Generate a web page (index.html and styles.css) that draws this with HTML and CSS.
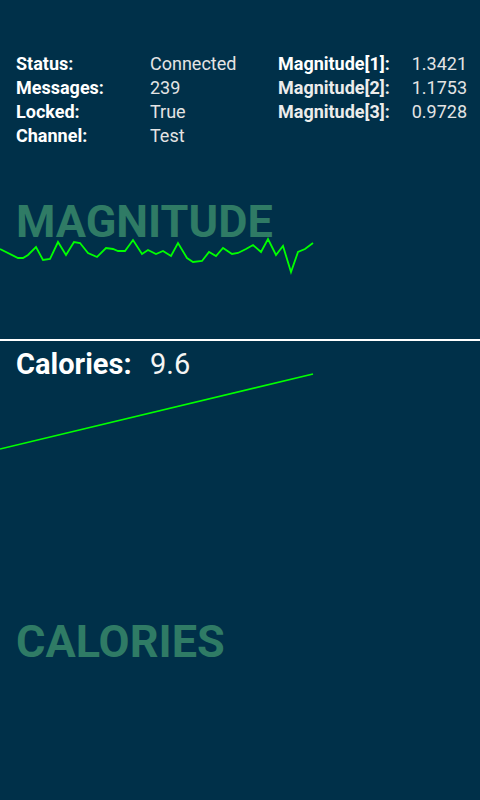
FILE: index.html
```html
<!DOCTYPE html>
<html>
<head>
<meta charset="utf-8">
<link rel="stylesheet" href="styles.css">
</head>
<body>
<div class="screen">
  <section class="top">
    <div class="stats">
      <div class="col col-a">
        <span class="lbl">Status:</span><span class="val">Connected</span>
        <span class="lbl">Messages:</span><span class="val">239</span>
        <span class="lbl">Locked:</span><span class="val">True</span>
        <span class="lbl">Channel:</span><span class="val">Test</span>
      </div>
      <div class="col col-b">
        <span class="lbl lbl-hi">Magnitude[1]:</span><span class="val num">1.3421</span>
        <span class="lbl lbl-dim">Magnitude[2]:</span><span class="val num">1.1753</span>
        <span class="lbl lbl-dim">Magnitude[3]:</span><span class="val num">0.9728</span>
      </div>
    </div>
    <div class="panel mag-panel">
      <svg class="chart" width="480" height="192" viewBox="0 147 480 192">
        <polyline fill="none" stroke="#00ff00" stroke-width="1.8" stroke-linejoin="miter"
          points="0,249 18,258 23,258 28,255 36,247 43,260 50,259 58,242 66,255 74,242 80,243 88,253 97,257 106,248 113,249 118,251 125,251 133,240 142,254 148,250 156,254 163,251 171,256 178,243 187,258 193,262 202,261 209,252 216,256 223,248 232,254 238,253 246,249 253,245 261,252 268,239 276,255 283,246 291,272 298,252 305,249 313,243"/>
      </svg>
      <h2 class="title mag-title">MAGNITUDE</h2>
    </div>
  </section>
  <div class="divider"></div>
  <section class="panel cal-panel">
    <svg class="chart" width="480" height="459" viewBox="0 341 480 459">
      <line x1="0" y1="449" x2="313" y2="374" stroke="#00ff00" stroke-width="1.6"/>
    </svg>
    <div class="cal-content">
      <div class="cal-head"><span class="cal-lbl">Calories:</span><span class="cal-val">9.6</span></div>
      <h2 class="title cal-title">CALORIES</h2>
    </div>
  </section>
</div>
</body>
</html>
```

FILE: styles.css
```css
* { box-sizing: border-box; }
html, body {
  margin: 0;
  padding: 0;
  background: #003049;
}
body {
  font-family: Roboto, "Noto Sans", sans-serif;
  color: #ffffff;
}
.screen {
  width: 480px;
  height: 800px;
  overflow: hidden;
  background: #003049;
}
.top {
  height: 339px;
  display: flex;
  flex-direction: column;
}
.stats {
  display: flex;
  padding-top: 52px;
  height: 147px;
}
.col {
  display: grid;
  grid-auto-rows: 24px;
  font-size: 18px;
  line-height: 24px;
  align-content: start;
}
.col-a {
  grid-template-columns: 134px 128px;
  padding-left: 16px;
}
.col-b {
  grid-template-columns: 1fr auto;
  width: 189px;
}
.lbl {
  font-weight: 700;
  color: #ffffff;
  white-space: nowrap;
}
.lbl-dim { color: #ececec; }
.val {
  font-weight: 400;
  color: #e4e4e4;
  white-space: nowrap;
}
.num { text-align: right; }
.panel {
  display: grid;
}
.panel > * {
  grid-area: 1 / 1;
}
.mag-panel {
  height: 192px;
}
.chart {
  display: block;
}
.title {
  margin: 0;
  font-size: 45px;
  line-height: 45px;
  font-weight: 700;
  color: #2f7b65;
  padding-left: 16px;
  align-self: start;
}
.mag-title {
  margin-top: 52px;
}
.divider {
  height: 2px;
  background: #ffffff;
}
.cal-panel {
  height: 459px;
}
.cal-content {
  display: flex;
  flex-direction: column;
}
.cal-head {
  padding: 9px 0 0 16px;
  font-size: 29px;
  line-height: 29px;
  display: flex;
}
.cal-lbl {
  font-weight: 700;
  width: 134px;
}
.cal-val {
  font-weight: 400;
  color: #f4f4f4;
}
.cal-title {
  margin-top: 240px;
}
```
